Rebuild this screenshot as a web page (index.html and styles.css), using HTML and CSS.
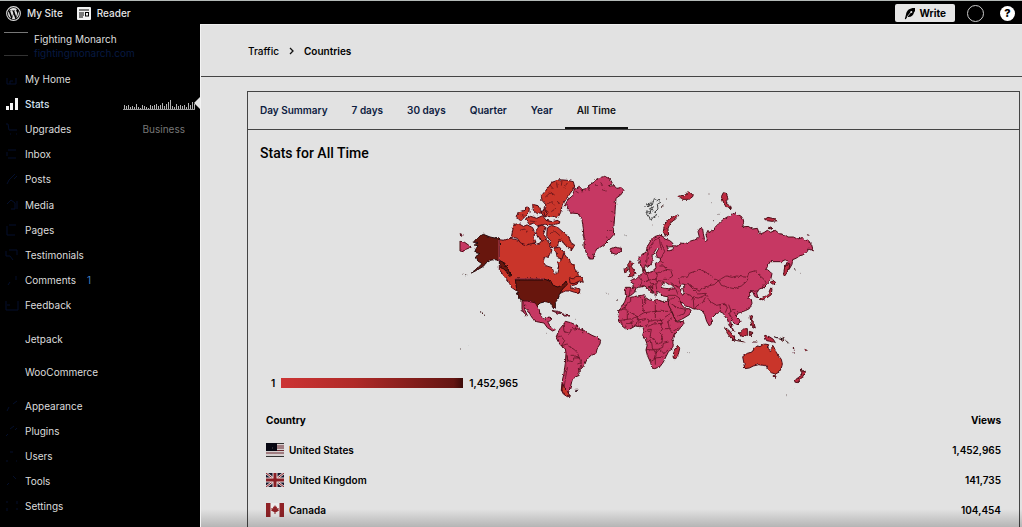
FILE: index.html
```
<!DOCTYPE html>
<html lang="en">
<head>
<meta charset="utf-8">
<title>Stats for All Time</title>
<meta name="viewport" content="width=device-width, initial-scale=1">
<link rel="stylesheet" href="styles.css">
</head>
<body>
<header class="topbar">
  <a class="topbar-link" href="#">
    <svg class="wp-logo" viewBox="0 0 24 24" aria-hidden="true"><circle cx="12" cy="12" r="11" fill="none" stroke="#ddd" stroke-width="1.7"/><path d="M3.300 12a8.700 8.700 0 0 0 4.900 7.830L4.050 8.460A8.650 8.650 0 0 0 3.300 12zm14.570-.440c0-1.080-.390-1.820-.720-2.400-.440-.720-.850-1.320-.850-2.040 0-.800.600-1.540 1.460-1.540h.110A8.700 8.700 0 0 0 4.730 7.220h.560c.910 0 2.320-.110 2.320-.110.470-.030.520.660.050.720 0 0-.470.050-1 .080l3.180 9.450 1.910-5.730-1.360-3.720c-.470-.030-.910-.080-.910-.080-.470-.030-.420-.750.050-.720 0 0 1.440.110 2.300.110.910 0 2.320-.110 2.320-.110.470-.030.530.660.060.720 0 0-.480.050-1 .080l3.150 9.380.870-2.910c.380-1.210.640-2.060.64-2.820zm-5.720 1.200-2.610 7.590a8.700 8.700 0 0 0 5.350-.140zm7.490-4.940c.040.280.060.580.060.900 0 .880-.170 1.880-.660 3.120l-2.660 7.680a8.700 8.700 0 0 0 3.260-11.700z" fill="#ddd"/></svg>
    <span>My Site</span>
  </a>
  <a class="topbar-link" href="#">
    <svg class="reader-icon" viewBox="0 0 14 13" aria-hidden="true"><rect width="14" height="13" rx="1" fill="#f2f2f2"/><path d="M2 3h10M2 6h5M2 8h5M2 10h4" stroke="#000" stroke-width="1"/><rect x="8.500" y="5.500" width="3" height="3.500" fill="none" stroke="#000"/></svg>
    <span>Reader</span>
  </a>
  <div class="topbar-actions">
    <button class="write" type="button">
      <svg class="write-icon" viewBox="0 0 12 13" aria-hidden="true"><path d="M11 1C7 .5 2.500 2.500 2 7.500L.8 12l1 .3L3.200 10C7 10.500 9.500 8.500 10 5.500L11 4z"/><path d="M3 10l4.500-5.500" stroke="#e4e4e4" stroke-width=".8"/><circle cx="7.300" cy="5" r="1" fill="#e4e4e4"/></svg>
      <span>Write</span>
    </button>
    <button class="avatar" type="button" aria-label="My profile"></button>
    <button class="help" type="button" aria-label="Help">?</button>
  </div>
</header>
<div class="layout">
  <nav class="sidebar" aria-label="Site">
    <a class="site" href="#">
      <span class="site-thumb"></span>
      <span class="site-text"><span class="site-name">Fighting Monarch</span><span class="site-url">fightingmonarch.com</span></span>
    </a>
    <ul class="menu menu-main">
      <li><a href="#"><svg class="icon" viewBox="0 0 14 14"><path d="M2 6v6h9V6M5 12V9h3"/></svg>My Home</a></li>
      <li class="active"><a href="#"><svg class="icon icon-on" viewBox="0 0 14 14"><path d="M1 9h3v4H1zM5 6h3v7H5zM10 1h3v12h-3z"/></svg>Stats
        <svg class="spark" viewBox="0 0 72 12" aria-hidden="true"><path d="M1.500 12V7M3.500 12V8M5.500 12V7M7.500 12V9M9.500 12V8M11.500 12V9M13.500 12V6M15.500 12V9M17.500 12V10M19.500 12V7M21.500 12V8M23.500 12V9M25.500 12V10M27.500 12V7M29.500 12V8M31.500 12V7M33.500 12V6M35.500 12V8M37.500 12V7M39.500 12V5M41.500 12V8M43.500 12V6M45.500 12V4M47.500 12V2M49.500 12V8M51.500 12V9M53.500 12V6M55.500 12V8M57.500 12V7M59.500 12V8M61.500 12V7M63.500 12V9M65.500 12V5M67.500 12V7M69.500 12V4M71.500 12V6" stroke="#b4b4b4"/><path d="M0 11.500h72" stroke="#999"/></svg></a></li>
      <li><a href="#"><svg class="icon" viewBox="0 0 14 14"><path d="M1 2h2l1 6h8M5 12h1M11 12h1"/></svg>Upgrades<span class="plan">Business</span></a></li>
      <li><a href="#"><svg class="icon" viewBox="0 0 14 14"><path d="M3 3h8M2 5v4M3 11h8"/></svg>Inbox</a></li>
      <li><a href="#"><svg class="icon" viewBox="0 0 14 14"><path d="M2 12l2-4 6-6M9 7l3-3"/></svg>Posts</a></li>
      <li><a href="#"><svg class="icon" viewBox="0 0 14 14"><path d="M2 6l4-4 4 3v6H6M12 3v8"/></svg>Media</a></li>
      <li><a href="#"><svg class="icon" viewBox="0 0 14 14"><path d="M2 3v9h8M4 2h7"/></svg>Pages</a></li>
      <li><a href="#"><svg class="icon" viewBox="0 0 14 14"><path d="M1 3v5h4l3 4M4 2h8v5"/></svg>Testimonials</a></li>
      <li><a href="#"><svg class="icon" viewBox="0 0 14 14"><path d="M3 12l2-3M11 3v4"/></svg>Comments<span class="count">1</span></a></li>
      <li><a href="#"><svg class="icon" viewBox="0 0 14 14"><path d="M1 3v9h12V3M2 7h3"/></svg>Feedback</a></li>
    </ul>
    <ul class="menu menu-extra">
      <li><a href="#"><span class="icon"></span>Jetpack</a></li>
      <li><a href="#"><span class="icon"></span>WooCommerce</a></li>
    </ul>
    <ul class="menu menu-admin">
      <li><a href="#"><svg class="icon" viewBox="0 0 14 14"><path d="M2 12l2-4M8 5l4-3"/></svg>Appearance</a></li>
      <li><a href="#"><svg class="icon" viewBox="0 0 14 14"><path d="M1 12l2-2M5 5l4-3M10 6l2-2"/></svg>Plugins</a></li>
      <li><a href="#"><svg class="icon" viewBox="0 0 14 14"><path d="M1 12h2M11 12h1M5 3h3"/></svg>Users</a></li>
      <li><a href="#"><svg class="icon" viewBox="0 0 14 14"><path d="M2 11l2-2M8 2l3 3"/></svg>Tools</a></li>
      <li><a href="#"><svg class="icon" viewBox="0 0 14 14"><path d="M2 2v2M2 9v3M12 2v3M12 9v2"/></svg>Settings</a></li>
    </ul>
  </nav>
  <main class="main">
    <nav class="crumbs" aria-label="Breadcrumb">
      <a href="#">Traffic</a>
      <svg class="chevron" viewBox="0 0 5 8" aria-hidden="true"><path d="M1 1l3 3-3 3" fill="none" stroke="#111" stroke-width="1.300"/></svg>
      <span class="crumb-current">Countries</span>
    </nav>
    <section class="card">
      <nav class="tabs" aria-label="Period">
        <a href="#">Day Summary</a><a href="#">7 days</a><a href="#">30 days</a><a href="#">Quarter</a><a href="#">Year</a><a class="current" href="#" aria-current="page">All Time</a>
      </nav>
      <h1 class="title">Stats for All Time</h1>
      <div class="geo">
        <svg class="map" viewBox="454 173 360 228" role="img" aria-label="Views by country">
          <defs>
            <filter id="coast" x="-5%" y="-5%" width="110%" height="110%"><feTurbulence type="fractalNoise" baseFrequency=".3" numOctaves="2" seed="4" result="n"/><feDisplacementMap in="SourceGraphic" in2="n" scale="3" xChannelSelector="R" yChannelSelector="G"/></filter>
          </defs>
          <g class="land" filter="url(#coast)">
            <!-- Americas, north -->
            <g transform="translate(450 165) scale(.33333)">
              <path class="ca" d="M148 224l14 2 18-6 20 4 20 10 20-2 18 6 12-4 8-12 12 2 10 14-2 12 8 4-4 14-20 12-2 12 8 10 18 6 8 20 6-2 6-20-2-14 10-6-4-18 12 2 16 12 4 14 10 4 2 12 8 10 6 16-2 16-12 6-12 2 2 10 14-4 12 4-2 12-14-2-12-4-16 0-18 8-14 12-8-2-4-16-22-2H200l-14-10-12-20-14-18-12-16z"/>
              <path class="ca" d="M192 178l14-2 14 8 12-4 16 8 6 14-2 16 6 14-14 4-14 4-18-6-10-14-18-4zM198 154l10-14 14-4 6-10 10 4-2 16-10 8-14 14zM226 162l16-8 18 6 18-8 10 14 18 4 18-4 6 8-20 6-24-2-24 4-10-8-14 4zM248 118l16 4 12 20-14 4-12-10zM262 186l14-6 12 8-8 20 10 12-10 10-16-12-6-14zM292 186l14-4 18 6 18 16 12 8 10 22 10 6-8 14-14-6-12-16-14-4-4 18-18 2-4-22-10-12zM274 92l14-16 18-24 22-8 24 2 18 4 4 16-14 20-10 14-14 22-4 20-8 16-16-4-22 2-6-20 8-16-12-14zM312 250l16-4 14 16-6 20-14-4-4-18zM272 142l12-8 8 12-8 10zM358 338l12 4 8-8 16 0 6 18-12-4-16 8-12-2z"/>
              <path class="border" d="M286 96l16-14 12 8M300 60l10 12M320 52l2 16M336 48l-2 14M352 54l-10 14M290 118l14-8 10 12M304 140l14-10M320 108l10 8M284 132l12 10M210 196l14-4 8 12M300 206l14-8 16 14M324 222l12 4 8 14M212 150l10 4M240 168l16 2M290 166l12 4"/>
              <path class="us" d="M70 232l12-14 18-10 20 8 28 6v64l-14-2-12 2-14 8-8 10-20 12-16 8 20-16 12-12-12-8-6-14 12-8-16-4 4-10 6-10-12-2 12-8zM148 286l16 8 12 24 8 14-6 2-10-16-18-16zM196 342h84l22 6 8 14 14 4 16-8 8-10 4 10-16 16-6 12-6 16-8 10 0 18-6 0-10-18-14-2-16 4-10 10-16-10-20-4-14-8-8-18-4-24z"/>
              <path class="pink" d="M216 408l18 0 22 6 12 20 2 18 14 10 16-6 6 6-12 10 8 14 14 8-8 4-16-10-10-14-22-4-14-12-10-18-14-18 2 12 8 18-6 0-10-20z"/>
              <path class="pink" d="M342 126l12-22 14-12 4-18 16-10 8 10 16-4 8-12 16-8 6-10 22-6 16 8 8 14-14 8 18-2 8 8 14-2 8 8-10 14-14 10-2 26-2 28-2 28-2 28-12 14-14 14-12 8-12 6-8 16-2 14-12 0-8-16-8-20 0-24-2-32-4-26-12-18-20-2-12-14 2-14z"/>
              <path class="pink" d="M480 252l14-6 18 4 0 10-14 8-12-4zM30 206l10 4-6 4zM30 228l14 4 14 10 6 4-14 6-10 8-10-2z"/>
              <path class="border" d="M376 78l10 6M392 72l6 10M414 68l4 10M436 58l8 6M452 52l6 10M456 74l14 4M490 110l8 8M486 140l10 4M482 166l10 6M474 196l12 4M468 214l6 8M398 210l6 10M404 236l6 6"/>
              <path class="us" d="M38 328h4M46 329h6M90 440l8 4 6 8M526 210h1"/>
            </g>
            <!-- Americas, south -->
            <g transform="translate(450 280) scale(.33333)">
              <path class="pink" d="M306 92l16 2 14 6-12 0zM338 102l16 2 6 4-18 0zM340 134L346 124 362 128 376 134 388 144 400 150 412 158 426 166 440 172 452 180 450 192 442 204 438 220 420 228 410 240 404 254 396 264 386 272 388 286 374 292 366 302 362 318 358 330 354 342 362 348 352 350 340 342 334 330 336 306 342 280 346 250 348 220 346 206 332 196 324 184 318 172 324 158 330 146z"/>
              <path class="border" d="M340 134l2 20 16 6 8-14 24 2 10 10M320 172l12-4 12 14-10 16 16-6 8 8 14 8 10 10 6 16-14 0-8 12-12-4-4-16M362 226l10 0 16 8 6 14-12 4M394 248l-4 16-4 10M352 226l0 34-6 38-6 40M378 136l2 14M400 152l-4 8"/>
              <path class="ca" d="M338 310l-2 20 10 16 14 2-8-14-8-8z"/><path class="us" d="M376 331l8 0M470 40h1M476 42h1M502 60h1M289 160h1M30 207h2M55 199h1M376 118h1"/>
            </g>
            <!-- Eurasia, Africa and Oceania -->
            <g transform="translate(610 260) scale(.33333)">
              <path class="pink" d="M102 33L88 7 86-5 96-17 108-23 112-40 122-57 134-70 148-75 160-70 164-63 178-59 188-51 190-41 176-39 170-43 176-27 188-31 194-43 202-41 210-51 226-49 242-57 262-63 268-69 264-85 270-95 278-93 280-79 284-55 292-59 288-77 294-89 300-81 308-85 316-99 326-109 334-117 348-127 364-135 376-143 382-137 394-131 400-121 402-107 396-99 414-101 428-93 442-95 448-79 460-81 472-89 482-83 496-89 508-79 526-75 534-69 550-69 562-63 578-67 592-57 604-49 610-27 596-33 590-23 578-15 570-13 558-5 548-1 546 13 538 27 526 37 524 23 532 5 526-1 514 5 496 5 480 5 474 17 468 27 478 33 486 41 482 59 470 73 460 83 448 87 440 99 444 114 434 109 428 95 418 95 420 108 414 110 424 118 426 130 418 146 406 152 394 156 384 160 376 166 388 178 390 186 380 196 372 190 366 178 362 188 366 202 372 214 364 208 356 190 352 176 346 172 340 160 328 154 320 160 306 174 304 192 298 198 290 184 284 164 276 152 268 148 250 146 236 140 226 138 214 124 210 124 216 136 226 146 236 146 244 152 238 164 222 174 202 184 196 180 190 164 182 148 174 136 176 122 172 110 160 108 150 100 140 90 142 104 136 108 130 96 122 84 116 78 124 90 128 100 120 96 112 84 104 78 96 80 86 82 78 84 74 96 66 104 56 108 46 104 46 82 70 82 68 70 60 64 68 58 80 56 86 50 92 44 100 40 98 28 104 26 108 38 122 36 134 32 138 22 136 10 150 3 152-5 142-8 138-20 146-34 142-38 132-22 126-12 130 0 122 14 112 22 106 14z"/>
              <path class="sea" d="M152 82l4-12 10-4 8 6 12 4 10 10-16 2-14-3zM210 78l8-6 8 2-8 10 4 14-2 10-6-8z"/>
              <path class="border" d="M110 10l2-26 8-24 14-20 16-8M148-68l2 18 4 20M154-6l10-20-10-24M86 50l10 14-6 10 14 4M100 40l12 4 4 16-12 6M116 60l16-2 12 4-4 10-16 0zM116 44l-2-8M136 34l6 12-4 14M148 18l14 0 6 10 14 2 6 18-14 10-14 0M138 40l14-4 16-6M144 62l16 2 2 14M128 70l0 14M138 74l2 14M150 2l12 8M62 82l-4 22M76 82l-8 0M120 74l10 12M182 68l14 8 12 6"/>
              <path class="border" d="M210 72l-4-14 10-8 16 2 6-12 22-8 10-4 16 8 14 8 12 12 14 6 8-6 14-8 18 4 14-4 14 2 18 2 4-14 20-6 8 10 18 16 6 10-12 12 8 4M326 62l8 14 20 6 18 4 22-8 14-12 6-10M326 62l-14 12-18 4-18 6-8 10-20-14-14-8-16 10M238 76l14 14 14 12 20-2 8 10M224 100l18 6 8 14 2 28M250 112l16 2 14-6 10-8M286 112l-8 16-18 10-6 10M290 110l10 14 20 12 18-4 10 4M330 134l2 20M340 134l6-4 6 14-6 14M356 134l6 16 12-2 10 8M362 150l-4 14 8 14M372 156l12 20M176 106l20 0 12 8 4 12M198 88l6 16M176 122l16-10M182 130l18 12 26 6M202 168l20-6 6-14M196 76l10 8M432 94l14-2"/>
              <path class="pink" d="M50 108l12 4 20-4 22-4 2 8 12 8 14 2 8-4 16 6 16 0 4 12 8 16 8 20 8 14 20-2 2 6-16 20-14 16-6 12 4 14-2 14-12 8-8 16-8 16-10 14-16 6-8-2-4-16-10-22-4-16 4-16-6-16-8-12 4-14-4-12-10 0-12-2-14 8-16 0-12-10-8-12-2-14 2-16 8-14 10-14z"/>
              <path class="border" d="M62 112l0 12-16 12 0 10-22 6M38 142l44 28 20-12-4-16 0-22-10-12M104 108l4 18-10 12M136 122l0 52M136 154h46M102 158l34-4M52 150v28l-26 4M52 178l14-2 16-6 0 10 26-4M46 206l4-16 16 0 0-12M66 190l2 14M82 180l-4 18M86 200l2-20M112 176l4 8-8 18M116 184l20-4 20 2 8-10 18-12M112 200l18-8 28-2M158 190l-8-14M112 208h12l-4 24 14 8 6 12 16-4 2-16-8-14 8-12-8-16M108 214h12M158 206l20 0 10 12M178 206l-4-22 12-8M106 240l18 2 4 26 16 0 14-6 2-12 16-4M108 268l22 2 10 6-4 20-12 8M136 280l12-12 14 12-8 12-18 2M136 296v18M162 280l12-10M34 184l4 14M186 216l22-14"/>
              <path class="isle" d="M203 256l6 10-6 24-6 6-8-4 4-22zM344 202l12 8 14 18 6 12-10-2-14-18zM372 240l20 4 14 2M388 218l14-12 10 0 0 18-12 6-10-4zM420 166l8 2-4 14 8 8 4 14-10-6-4-14zM418 214l12 4-8 4 4 12-8-8zM464 226l14 4 12 8 6 10-14-4-12-2-6-10zM426 246h16M506 236l16 6M518 232l8 8"/>
              <path class="isle" d="M56 12l4-10 8 8-4 10 8 10 6 10-8 8-16 2 8-10-4-8zM42 24l12-2 0 12-10 4zM448 118l12-8 14-6 8-20 4 2-2 18-14 10-14 6zM484 70l4-10 8 6-4 8zM166-72l-6-14 4-20 10-14 24-16 8 2-8 10-18 14-6 16 2 20zM202-190l12-4 12 2 8-14 8 4 8 10-12 10-20 0zM334-190l6-12 8 2 6 14-6 12 10 8 6 12-14-2-8-14zM464-122l10-6 18 4 8 6-14 2-14-2zM476-98l10 4-4 4zM590-76l8 2M524 22l10-12 6 2-4 18-12 18-4-4z"/>
              <path class="au" d="M398 290L412 280 426 276 434 264 442 258 450 260 462 252 476 254 472 264 482 272 488 256 492 262 498 276 506 288 514 298 517 312 514 324 508 336 496 342 484 338 472 328 468 316 458 316 446 314 430 318 418 324 404 326 402 310z"/>
              <path class="isle" d="M490 346l8 2-2 8-6-4zM572 324l6 10 8 2-8 14-16 18-8-2 4-8 16-12 2-12zM584 268l6 2-4 4M548 264l6 4M548 278l6 2"/>
              <path class="us" d="M492 230l10 4M510 234l12 4M528 242l8 8M552 26l4 2M572 40h1M304-172h1M296-198h2M168-183h2M154-160l6-4M126-105h1M144-130h1M48-73h1M552 388h1M530 407h1M232 280h1M238 278h1M76 95h3M384 238l12 6M22 120h2M310-118h2M326-137h2"/>
              <path class="svalbard" d="M104-159l8-12 4 12 6-16 4 12 8-24 6 10 8-6 4 10-10 6 2 14-10 10 6 8-12 8-6 10-4-12-10-14 10-2 8 4M116-152l8-4 8-4M108-148l12 10 4-20 8 14M112-168l14 6"/>
            </g>
          </g>
          <path d="M499 240v21M515 279h29" stroke="#c4425c" fill="none"/><path d="M515 280h28" stroke="#240608" fill="none"/>
        </svg>
        <div class="legend"><span>1</span><span class="scale"></span><span>1,452,965</span></div>
      </div>
      <table class="countries">
        <thead><tr><th scope="col">Country</th><th scope="col">Views</th></tr></thead>
        <tbody>
          <tr><td><span class="place"><svg class="flag" viewBox="0 0 18 14" aria-hidden="true"><path fill="#d6d0d0" d="M0 0h18v14H0z"/><path d="M0 .5h18M0 3h18M0 5h18M0 7.500h18M0 10h18M0 13.500h18" stroke="#6b2a32"/><path d="M0 .5h18M0 13.500h18" stroke="#333"/><path d="M0 0h11v8H0z" fill="#060611"/><path d="M6 5h1" stroke="#555"/></svg>United States</span></td><td>1,452,965</td></tr>
          <tr><td><span class="place"><svg class="flag" viewBox="0 0 18 14" aria-hidden="true"><path fill="#15152b" d="M0 0h18v14H0z"/><path d="M0 0l18 14M18 0L0 14" stroke="#e6dede" stroke-width="2.500"/><path d="M0 0l18 14M18 0L0 14" stroke="#8a1e24"/><path d="M9 0v14M0 7h18" stroke="#e6dede" stroke-width="5"/><path d="M9 0v14M0 7h18" stroke="#8a1e24" stroke-width="3"/></svg>United Kingdom</span></td><td>141,735</td></tr>
          <tr><td><span class="place"><svg class="flag" viewBox="0 0 18 14" aria-hidden="true"><path fill="#ececec" d="M0 0h18v14H0z"/><path d="M0 0h4.500v14H0zM13.500 0H18v14h-4.500zM9 2l1 2 1-.500-.2 2 2-.500-.5 1.500.7 1L10.500 9l-1 .3V11h-1V9.300L5 7.500l.7-1L5.200 5l2 .5L7 3.500 8 4z" fill="#8f2226"/></svg>Canada</span></td><td>104,454</td></tr>
        </tbody>
      </table>
    </section>
  </main>
</div>
</body>
</html>
```
FILE: styles.css
```
* { box-sizing: border-box; }
html, body { height: 100%; }
body {
  margin: 0;
  display: flex;
  flex-direction: column;
  overflow: hidden;
  background: #000;
  color: #000;
  font: 600 10px/14px Inter, "Liberation Sans", sans-serif;
}
a { color: inherit; text-decoration: none; }
button { font: inherit; border: 0; padding: 0; }

.topbar {
  flex: none;
  display: flex;
  align-items: center;
  gap: 14px;
  height: 24px;
  padding: 1px 7px 0 6px;
  border-top: 1px solid #b4bab7;
  color: #e4e4e4;
  font-weight: 500;
}
.topbar-link { display: flex; align-items: center; gap: 6px; }
.wp-logo { width: 15px; height: 15px; }
.reader-icon { width: 14px; height: 13px; }
.topbar-actions { display: flex; align-items: center; gap: 12px; margin-left: auto; }
.write {
  display: flex;
  align-items: center;
  gap: 4px;
  height: 18px;
  padding: 0 9px;
  border-radius: 2px;
  background: #e6e6e6;
  color: #000;
  font-weight: 700;
}
.write-icon { width: 12px; height: 13px; }
.avatar { width: 17px; height: 17px; border: 1px solid #ccc; border-radius: 50%; background: #000; }
.help {
  width: 15px;
  height: 15px;
  margin-left: 4px;
  border-radius: 50%;
  background: #fff;
  color: #000;
  font-size: 11px;
  font-weight: 800;
  line-height: 15px;
}

.layout { flex: 1; display: flex; min-height: 0; }
.sidebar { flex: none; width: 200px; color: #dcdcdc; font-weight: 400; }
.site { display: flex; gap: 6px; height: 42px; padding: 8px 0 0 4px; color: #dedede; }
.site-thumb { width: 24px; height: 24px; border-top: 1px solid #777; border-bottom: 1px solid #333; }
.site-text { display: flex; flex-direction: column; }
.site-url { color: #071a42; }
.menu { display: flex; flex-direction: column; margin: 0; padding: 0; list-style: none; }
.menu li { flex: 1; display: flex; }
.menu a { flex: 1; display: flex; align-items: center; padding: 0 15px 0 5px; }
.menu-main { height: 252px; }
.menu-extra { height: 67px; margin: 4px 0; }
.menu-admin { height: 126px; }
.icon { flex: none; width: 14px; height: 14px; margin-right: 6px; fill: none; stroke: #040f2c; }
.icon-on { fill: #f4f4f4; stroke: none; }
.active { position: relative; color: #d6e4f2; }
.active a { font-weight: 500; padding-right: 5px; }
.active::after {
  content: "";
  position: absolute;
  right: 0;
  top: 6px;
  border: 6px solid transparent;
  border-left: 0;
  border-right-color: #e2e2e2;
}
.spark { width: 72px; height: 12px; margin-left: auto; }
.plan { margin-left: auto; color: #777; }
.count { margin-left: 11px; color: #3f80c6; }

.main {
  flex: 1;
  position: relative;
  display: flex;
  flex-direction: column;
  min-width: 0;
  border-left: 1px solid #f4f4f4;
  border-top: 1px solid #f0f0f0;
  background: #e2e2e2;
}
.main::after {
  content: "";
  position: absolute;
  inset: auto 0 0;
  height: 18px;
  background: linear-gradient(rgba(0, 0, 0, 0), rgba(0, 0, 0, .2));
  pointer-events: none;
}
.crumbs {
  flex: none;
  display: flex;
  align-items: center;
  gap: 10px;
  height: 52px;
  padding-left: 47px;
  border-bottom: 1px solid #444;
  font-weight: 500;
}
.chevron { width: 5px; height: 8px; }
.crumb-current { font-weight: 600; }
.card {
  flex: 1;
  min-height: 0;
  margin: 14px 2px 0 46px;
  border: 1px solid #444;
  border-bottom: 0;
}
.tabs { display: flex; height: 38px; border-bottom: 1px solid #444; color: #0d2040; }
.tabs a { padding: 0 12px; line-height: 37px; }
.tabs .current { border-bottom: 2px solid #111; color: #111; }
.title { margin: 0; padding: 13px 12px 10px; font: 500 14px/20px Roboto, "Liberation Sans", sans-serif; }
.geo { display: grid; margin-bottom: 4px; }
.map { grid-area: 1 / 1; justify-self: center; width: 360px; height: 228px; }
.legend {
  grid-area: 1 / 1;
  align-self: end;
  display: flex;
  align-items: center;
  gap: 6px;
  padding: 0 0 11px 23px;
}
.scale { width: 182px; height: 10px; background: linear-gradient(90deg, #cc3434, #b02a28 40%, #641512 95%, #3c0b09); }

.land path { stroke: #4c0e18; stroke-width: 3; stroke-linejoin: round; }
.land .pink { fill: #c63863; }
.land .ca, .land .au { fill: #c93429; }
.land .isle { fill: #bd2c40; }
.land .us { fill: #681610; stroke: #24080a; }
.land .border { fill: none; stroke-width: 2; }
.land .sea { fill: #e2e2e2; }
.land .svalbard { fill: none; stroke: #444; }

.countries { width: 100%; border-collapse: collapse; }
.countries th, .countries td { height: 30px; padding: 0 18px; text-align: left; }
.countries th { font-weight: 700; }
.countries th:last-child, .countries td:last-child { text-align: right; }
.place { display: flex; align-items: center; gap: 5px; }
.flag { width: 18px; height: 14px; }
```
